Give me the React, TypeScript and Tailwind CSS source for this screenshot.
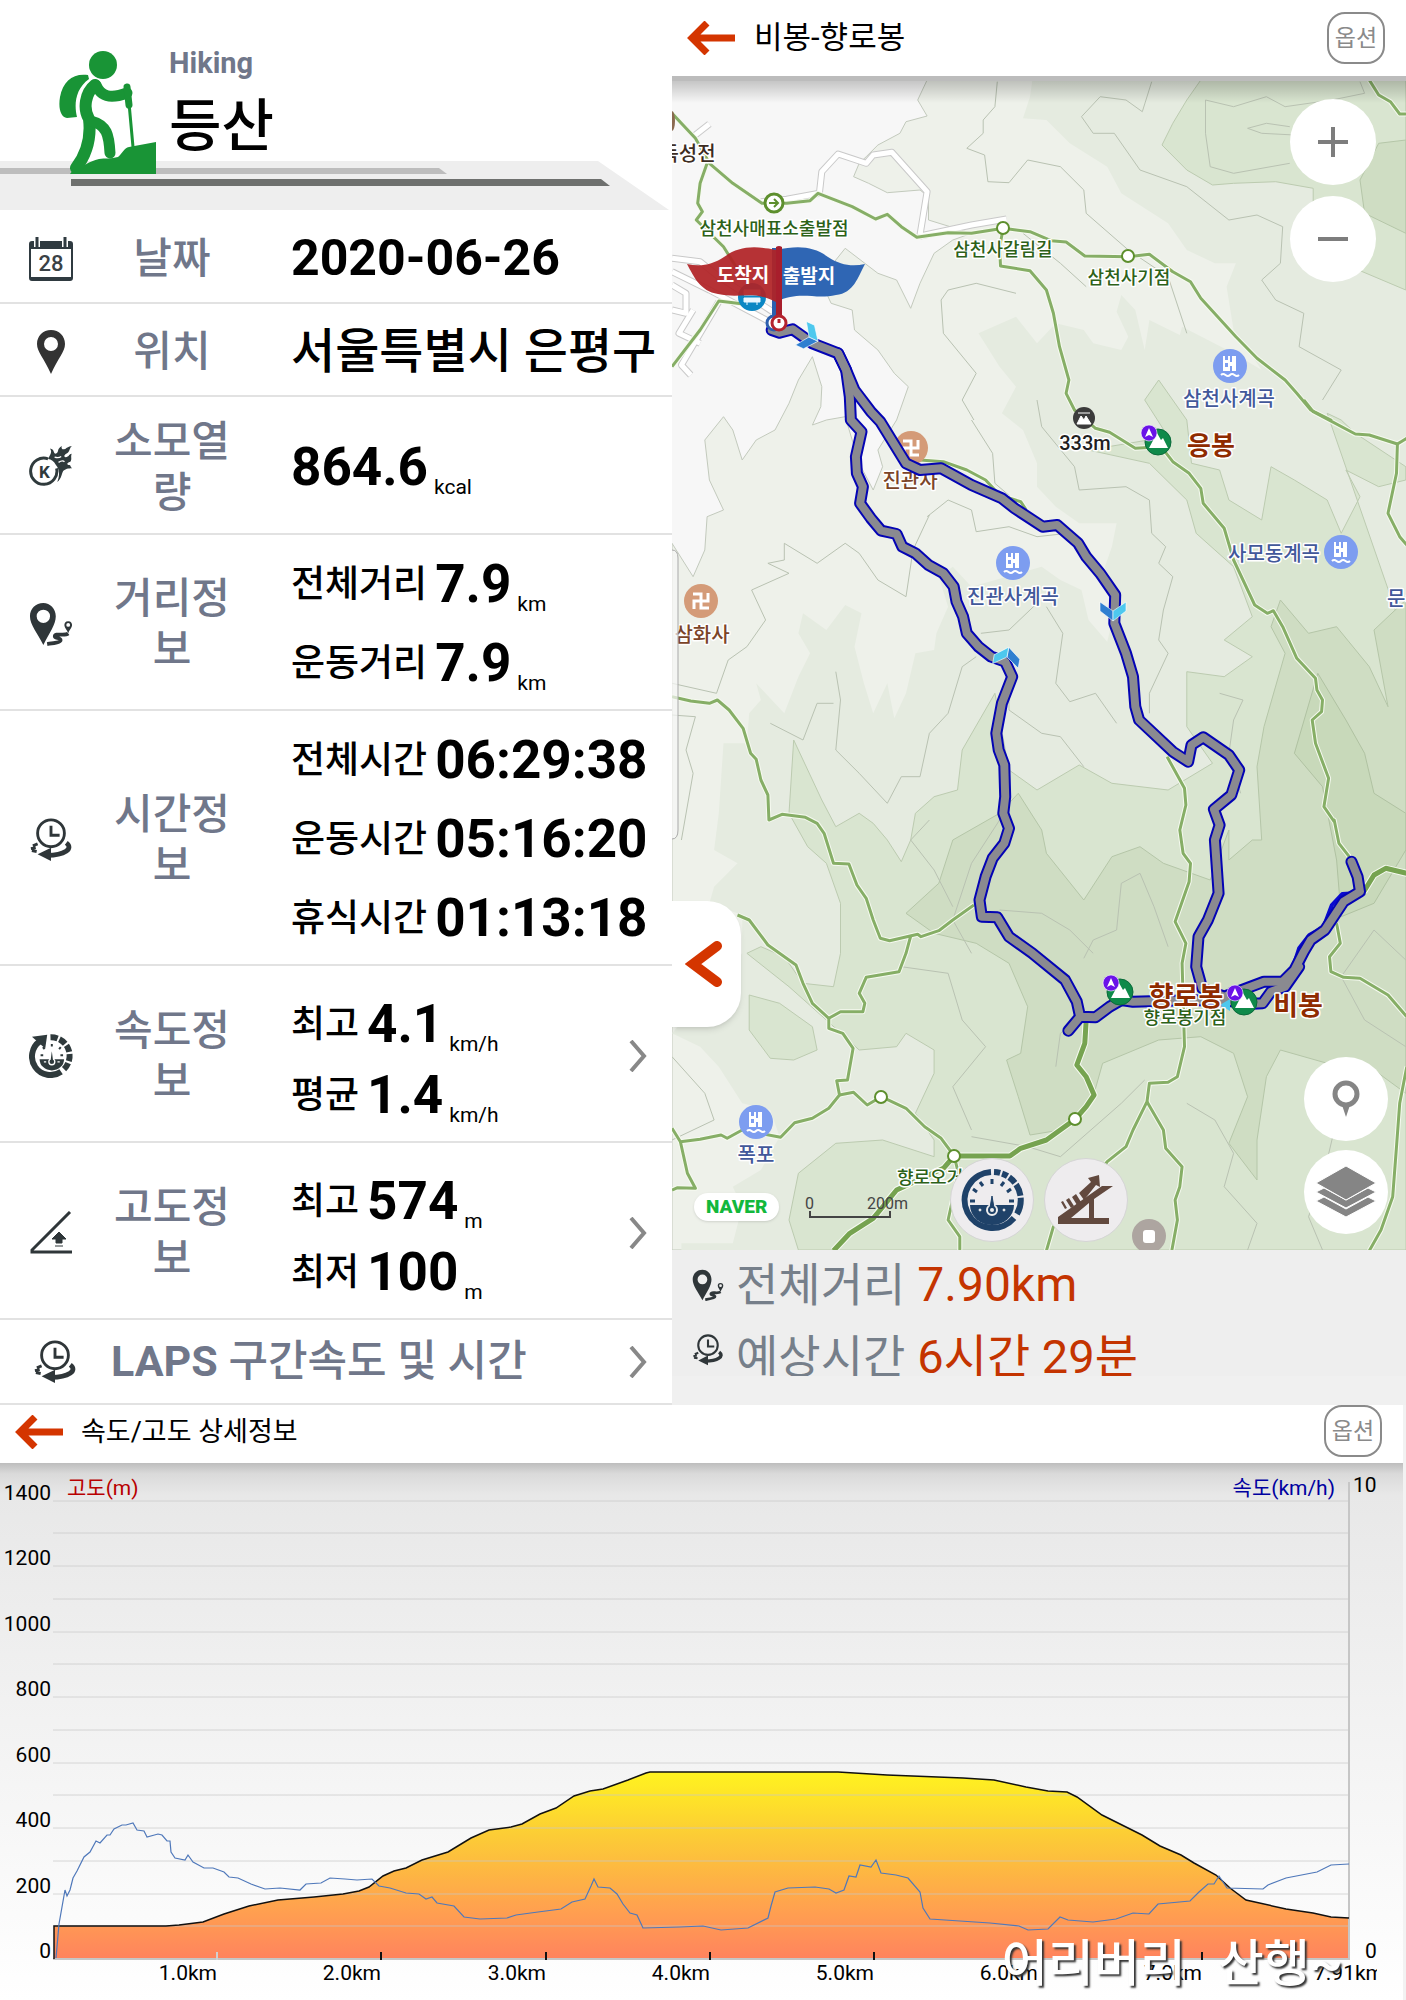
import React from 'react';

type Pt = [number, number];

const sheet = (top: number, pts: Pt[]): Pt[] => pts.map(([x, y]) => [x * 0.468, y / 3 + top]);
const north = (pts: Pt[]) => sheet(-81, pts);
const middle = (pts: Pt[]) => sheet(319, pts);
const south = (pts: Pt[]) => sheet(739, pts);
const toPoints = (pts: Pt[]) => pts.map(([x, y]) => `${x.toFixed(1)},${y.toFixed(1)}`).join(' ');

const TERRAIN_LOW = toPoints([
  ...north([[545, 240], [525, 300], [545, 348], [500, 365], [487, 400], [440, 435], [415, 470], [400, 490], [388, 530], [420, 550], [460, 578], [530, 570], [548, 590], [548, 660], [640, 700], [600, 720], [560, 760], [530, 850], [510, 925], [480, 840], [440, 820], [370, 745], [350, 780], [320, 850], [340, 910], [385, 930], [390, 990], [440, 1050], [475, 1120], [505, 1160], [480, 1260]]),
  ...middle([[480, 60], [440, 150], [450, 200], [430, 270], [400, 190], [370, 50], [330, 60], [300, 75], [318, 20], [320, -40], [300, -130], [270, -60], [250, 10], [220, 90], [180, 120], [150, 180], [130, 90], [110, 50], [70, 120], [80, 240], [110, 330], [75, 350], [70, 450], [45, 530], [0, 430]]),
  [0, 1169], [734, 1169], [734, -1],
]);

const TERRAIN_MID = toPoints([
  ...north([[770, 240], [765, 290], [750, 355], [800, 360], [850, 430], [930, 500], [960, 580], [1060, 670], [1100, 750], [1160, 790], [1205, 790], [1185, 860], [1200, 990], [1260, 1110], [1200, 1060], [1090, 980], [1085, 1005], [1020, 960], [1010, 1050], [990, 930], [960, 885], [950, 935], [975, 1010], [960, 1050], [900, 1030], [880, 990], [820, 970], [780, 1030], [735, 950], [655, 1000], [700, 1100], [735, 1160], [705, 1240]]),
  ...middle([[750, 90], [780, 190], [780, 260], [820, 320], [870, 370], [950, 370], [940, 440], [925, 500], [945, 640], [930, 725], [890, 660], [875, 570], [830, 540], [790, 500], [640, 560], [600, 500], [570, 530], [590, 620], [565, 700], [560, 750], [520, 760], [500, 880], [475, 955], [460, 850], [430, 940], [410, 850], [390, 740], [405, 640], [370, 615], [330, 690], [280, 640], [270, 700], [295, 760], [270, 830], [240, 940], [180, 850], [190, 900], [165, 940], [160, 1030], [110, 1030], [100, 1240]]),
  ...south([[90, 90], [140, 130], [90, 200], [80, 250], [150, 285], [150, 400], [0, 640], [60, 680], [100, 740], [150, 850], [210, 870], [230, 950], [190, 1050], [130, 1100], [150, 1160], [130, 1270], [20, 1270], [20, 1290]]),
  [734, 1169], [734, -1],
]);

const TERRAIN_HIGH = [
  toPoints([...north([[1130, 240], [1100, 300], [1070, 370], [1047, 435], [1100, 510], [1155, 555], [1200, 550], [1290, 545], [1370, 565], [1370, 620], [1450, 640], [1450, 800], [1568, 870], [1568, 240]])]),
  toPoints([
    ...north([[1400, 1240], [1430, 1260]]),
    ...middle([[1460, 100], [1568, 200], [1568, 240], [1510, 260], [1440, 210], [1470, 290], [1430, 400], [1400, 300], [1330, 240], [1280, 200], [1260, 360], [1190, 300], [1170, 210], [1110, 190], [1100, 60], [1040, -60], [1010, 0], [1060, 110], [890, 150], [1020, 190], [1100, 300], [1120, 400], [1200, 500], [1240, 650], [1180, 720], [1240, 770], [1180, 830], [1100, 815], [1100, 980], [1155, 1090], [1060, 1170], [940, 1150], [870, 1095], [780, 1170], [720, 1110], [690, 880], [620, 1050], [610, 1170], [560, 1190], [520, 1240]]),
    ...south([[510, 60], [490, 125], [460, 60], [430, 10], [400, -20], [350, 20], [320, -60], [260, -240], [250, -20], [290, 80], [330, 130], [360, 250], [360, 400], [345, 500], [280, 490], [240, 410], [190, 380], [160, 400], [250, 500], [330, 600], [400, 690], [480, 680], [500, 640], [560, 690], [560, 760], [520, 880], [560, 960], [560, 1010], [450, 960], [350, 970], [270, 1060], [250, 1200], [270, 1290]]),
    [734, 1169], [734, 560],
  ]),
  toPoints(south([[165, 525], [230, 550], [300, 620], [310, 690], [260, 720], [210, 715], [165, 630]])),
];

const TERRAIN_PEAK = [
  toPoints([
    ...middle([[1300, 600], [1280, 680], [1310, 760], [1265, 980], [1250, 1100], [1260, 1320]]),
    ...south([[1240, 60], [1190, 120], [1190, 30], [1150, 180], [1050, 130], [1000, 80], [940, 110], [880, 240], [800, 100], [790, 30], [740, -80], [700, -20], [600, 60], [570, 190], [500, 280], [560, 340], [650, 370], [720, 430], [760, 560], [745, 700], [715, 720], [740, 830], [765, 945], [830, 930], [900, 830], [920, 730], [1040, 660], [1130, 650], [1200, 700], [1230, 830], [1190, 970], [1250, 1080], [1250, 960], [1270, 770], [1300, 690], [1400, 730], [1500, 750], [1568, 820]]),
    [734, 520],
    ...middle([[1568, 600], [1500, 690], [1530, 920], [1490, 800], [1420, 680], [1360, 700]]),
  ]),
  toPoints(north([[1470, 540], [1510, 430], [1568, 420], [1568, 700], [1480, 640]])),
];

const TERRAIN_CORE = toPoints([
  ...middle([[1380, 820], [1440, 960], [1480, 1060], [1500, 1180], [1568, 1240]]),
  ...south([[1568, 90], [1500, 250], [1430, 290], [1420, 120], [1390, -100], [1330, -200]]),
]);

const CONTOURS = [
  north([[695, 245], [690, 320], [665, 360], [665, 400], [630, 445], [668, 465], [675, 545], [720, 548], [760, 480], [830, 500], [880, 570], [885, 640], [975, 750], [1060, 830], [1100, 1000]]),
  north([[1025, 245], [1005, 335], [970, 300], [915, 290], [875, 350], [900, 400], [945, 400], [1000, 510], [1100, 560], [1190, 660], [1250, 645], [1305, 680], [1300, 790], [1260, 840], [1290, 900], [1350, 940], [1340, 1040], [1430, 1110], [1390, 1200]]),
  north([[1140, 300], [1200, 320], [1270, 290], [1310, 320], [1410, 300], [1480, 280], [1470, 245]]),
  north([[1140, 300], [1140, 400], [1150, 500], [1200, 520], [1320, 490]]),
  north([[1320, 380], [1270, 370], [1230, 385], [1260, 400], [1330, 405]]),
  north([[735, 880], [650, 850], [590, 870], [575, 900], [580, 1000], [650, 1120], [620, 1200], [645, 1260]]),
  north([[750, 700], [830, 790], [885, 860]]),
  middle([[640, 60], [685, 160], [690, 250], [740, 310]]),
  middle([[545, 350], [590, 300], [640, 330], [650, 395], [720, 380], [780, 410], [845, 400]]),
  middle([[500, 590], [515, 450], [550, 345]]),
  middle([[500, 590], [440, 540], [400, 460], [370, 430], [310, 490], [240, 430], [240, 480], [205, 490], [250, 520], [170, 570], [200, 660], [160, 740], [120, 780], [95, 880], [0, 850]]),
  middle([[780, 0], [790, 80], [860, 200], [870, 270], [970, 260], [1020, 300], [1025, 400], [1055, 440], [1040, 490], [1070, 530], [1050, 630], [1040, 720], [1060, 760], [1020, 880], [1020, 940]]),
  middle([[800, 620], [835, 700], [820, 850], [850, 905], [905, 880], [950, 970]]),
  middle([[660, 700], [720, 690], [780, 610]]),
  middle([[720, 800], [720, 930], [790, 1000], [830, 1010], [880, 1100]]),
  middle([[350, 815], [360, 900], [350, 1050], [400, 1120], [460, 1210], [490, 1130], [530, 1130], [550, 1000], [590, 940], [620, 800], [650, 770]]),
  middle([[0, 945], [50, 950], [30, 1050], [45, 1120], [20, 1320]]),
  middle([[210, 970], [280, 1020], [310, 910], [345, 910]]),
  middle([[1170, 880], [1220, 900], [1200, 960], [1190, 1060], [1215, 1180]]),
  south([[550, 0], [510, 60], [560, 150], [600, 260]]),
  south([[700, 0], [640, 130], [600, 300], [640, 400]]),
  south([[900, 400], [850, 330], [790, 280], [700, 270]]),
  south([[880, 415], [900, 360], [950, 330], [960, 190], [1000, 160], [1030, 260], [1060, 380]]),
  south([[490, 440], [590, 460], [620, 600], [670, 680], [600, 800], [640, 930]]),
  south([[0, 710], [70, 820], [90, 900], [0, 960]]),
  south([[820, 740], [830, 640], [870, 600]]),
  south([[1100, 850], [1160, 900], [1200, 1000], [1180, 1100], [1250, 1210], [1230, 1290]]),
  south([[1390, 1290], [1360, 1190], [1390, 1080], [1420, 900], [1400, 800]]),
  south([[1568, 420], [1500, 330], [1430, 470], [1480, 600], [1568, 680]]),
  south([[640, 950], [760, 980], [830, 1010], [960, 850], [1010, 780]]),
];

const TRAILS = [
  north([[0, 340], [50, 415], [80, 490], [130, 550], [192, 610], [245, 610], [295, 602], [312, 580], [385, 620], [435, 657], [460, 643], [490, 680], [523, 712], [590, 698], [640, 700], [708, 685], [765, 695], [810, 722], [842, 726], [882, 768], [975, 770], [1020, 763], [1070, 815], [1108, 845], [1130, 895], [1205, 1010], [1250, 1075], [1310, 1140], [1335, 1180], [1365, 1230], [1410, 1262]]),
  middle([[1350, 0], [1370, 35], [1460, 102], [1490, 105], [1550, 132], [1548, 220], [1530, 340], [1555, 410], [1570, 435]]),
  middle([[1550, 132], [1570, 115]]),
  [
    ...north([[708, 685], [700, 740], [702, 798], [765, 812], [800, 870], [815, 940], [828, 1040], [848, 1140], [842, 1180], [860, 1230]]),
    ...middle([[905, 85], [935, 97], [990, 145], [1045, 140], [1070, 185], [1105, 220], [1130, 265], [1135, 310], [1180, 385], [1200, 480], [1245, 615], [1272, 640], [1285, 632], [1305, 680], [1335, 775], [1375, 835], [1378, 870], [1390, 900], [1388, 935], [1368, 960], [1375, 1030], [1403, 1135], [1393, 1220], [1415, 1265]]),
    ...south([[1415, 0], [1425, 70], [1450, 115]]),
  ],
  north([[75, 490], [60, 550], [55, 610], [65, 635], [52, 660], [110, 740], [150, 830]]),
  north([[170, 915], [100, 903], [60, 990], [0, 1100]]),
  north([[1490, 240], [1510, 285], [1535, 305], [1555, 342], [1570, 342]]),
  [
    ...middle([[0, 890], [40, 903], [80, 910], [97, 900], [122, 930], [152, 985], [168, 1060], [180, 1078], [190, 1140], [205, 1185], [207, 1260], [235, 1243], [285, 1252], [310, 1270]]),
    ...south([[325, 40], [345, 130], [378, 132], [395, 195], [415, 235], [430, 300], [445, 355], [465, 362], [525, 343], [532, 350], [570, 332], [600, 300], [645, 255]]),
  ],
  south([[510, 348], [500, 400], [485, 455], [415, 472], [400, 520], [412, 550], [408, 575], [360, 575], [335, 595]]),
  south([[140, 285], [165, 300], [205, 375], [265, 435], [280, 490], [300, 550], [335, 595], [335, 625], [365, 640], [387, 685], [375, 780], [352, 782], [358, 825], [335, 865], [300, 895], [262, 908], [232, 952], [150, 930], [118, 955], [105, 945], [60, 958], [18, 965], [0, 925]]),
  south([[18, 965], [33, 1060], [50, 1105], [12, 1103], [0, 1110]]),
  south([[358, 825], [388, 817], [417, 855], [447, 830], [500, 865], [540, 920], [575, 955], [603, 1008]]),
  [
    ...middle([[1058, 1070], [1095, 1165], [1098, 1215], [1085, 1290]]),
    ...south([[1092, 100], [1108, 130], [1105, 185], [1075, 305], [1098, 370], [1090, 430], [1095, 680], [1080, 770], [1060, 787], [1020, 790], [1015, 845], [985, 930], [970, 980], [930, 1025], [860, 1150], [815, 1220], [800, 1292]]),
  ],
  south([[1015, 845], [1050, 930], [1055, 985], [1090, 1040], [1085, 1100], [1075, 1140], [1080, 1200], [1068, 1292]]),
  south([[1420, 310], [1428, 370], [1405, 410], [1408, 455], [1435, 472], [1470, 475], [1530, 525], [1570, 590]]),
  south([[1570, 740], [1555, 850], [1548, 980], [1540, 1130], [1515, 1230], [1490, 1292]]),
  south([[603, 1008], [612, 1060], [590, 1200], [615, 1250], [615, 1292]]),
  middle([[530, 180], [580, 185], [630, 210], [670, 240], [700, 285], [745, 305], [757, 330]]),
].map(toPoints);

const MAIN_TRAILS = [
  south([[885, 600], [882, 670], [865, 735], [885, 770], [902, 825], [885, 860], [862, 897], [800, 960], [745, 985], [722, 1008], [660, 1008], [603, 1008], [580, 1045], [480, 1110], [430, 1195], [380, 1240], [345, 1292]]),
  south([[1478, 215], [1500, 165], [1525, 145], [1570, 160]]),
].map(toPoints);

const ROADS = [
  north([[190, 605], [245, 598], [315, 580], [320, 515], [355, 462], [415, 490], [430, 465], [470, 457], [545, 575], [530, 705]]),
  north([[530, 708], [640, 675], [715, 657]]),
  north([[0, 775], [60, 785], [100, 830], [215, 935]]),
  north([[0, 815], [80, 870], [215, 970], [260, 1000]]),
  north([[100, 905], [20, 1095], [40, 1125]]),
  north([[80, 372], [45, 410]]),
  north([[0, 855], [30, 880], [30, 940], [0, 930]]),
  north([[45, 930], [15, 1000], [60, 1030]]),
].map(toPoints);

const ROUTES = [
  [
    ...north([[213, 990], [230, 998], [258, 988], [300, 1030], [355, 1060], [372, 1110], [380, 1190], [382, 1255]]),
    ...middle([[382, 60], [405, 95], [393, 170], [395, 220], [408, 260], [402, 310], [425, 355], [447, 392], [480, 402], [492, 440], [520, 460], [548, 495], [580, 520], [602, 560], [608, 605], [622, 650], [630, 700], [655, 740], [682, 770], [712, 785], [727, 830], [705, 910], [693, 1000], [698, 1050], [710, 1095], [712, 1190], [708, 1240]]),
    ...south([[720, 25], [710, 70], [685, 115], [670, 170], [657, 240], [662, 290], [695, 292], [720, 350], [770, 400], [840, 480], [865, 545], [872, 590], [847, 632], [872, 590], [905, 592], [935, 560], [960, 540], [985, 545], [1060, 542], [1180, 540], [1230, 552], [1262, 550], [1280, 515], [1310, 500], [1340, 440]]),
  ],
  [
    ...north([[355, 1060], [372, 1110], [390, 1170], [425, 1235]]),
    ...middle([[445, 65], [500, 190], [530, 210], [575, 205], [640, 255], [705, 295], [732, 325], [792, 380], [823, 375], [868, 430], [885, 470], [915, 520], [947, 585], [945, 670], [970, 760], [985, 830], [990, 920], [998, 960], [1070, 1055], [1103, 1085], [1110, 1035], [1135, 1012], [1190, 1065], [1212, 1110], [1195, 1185], [1158, 1228], [1170, 1275]]),
    ...south([[1160, 60], [1168, 220], [1145, 300], [1125, 350], [1120, 440], [1133, 505], [1180, 530], [1265, 485], [1305, 485], [1330, 450], [1350, 395], [1365, 360], [1395, 330], [1435, 245], [1470, 215], [1465, 170], [1452, 125]]),
  ],
].map(toPoints);

interface MapLabel {
  text: string;
  x: number;
  y: number;
  size: number;
  fill: string;
  anchor?: 'start' | 'middle';
  bold?: boolean;
}

const GREEN = '#2c6118';
const BLUE = '#42589a';
const BROWN = '#7b4428';
const PEAK_BROWN = '#8f2b00';

// Drawn below the recorded route
const LABELS: MapLabel[] = [
  { text: '독성전', x: 16, y: 80, size: 20, fill: '#3c2c22' },
  { text: '삼천사매표소출발점', x: 102, y: 154, size: 18, fill: GREEN },
  { text: '삼천사갈림길', x: 331, y: 175, size: 18, fill: GREEN },
  { text: '삼천사기점', x: 457, y: 203, size: 18, fill: GREEN },
  { text: '삼천사계곡', x: 557, y: 325, size: 20, fill: BLUE },
  { text: '333m', x: 413, y: 369, size: 20, fill: '#1f1f1f' },
  { text: '응봉', x: 539, y: 374, size: 26, fill: PEAK_BROWN, bold: true },
  { text: '진관사', x: 238, y: 407, size: 20, fill: BROWN },
  { text: '진관사계곡', x: 341, y: 523, size: 20, fill: BLUE },
  { text: '사모동계곡', x: 602, y: 480, size: 20, fill: BLUE },
  { text: '문수사', x: 715, y: 525, size: 20, fill: BLUE, anchor: 'start' },
  { text: '삼화사', x: 30, y: 561, size: 20, fill: BROWN },
  { text: '폭포', x: 84, y: 1081, size: 20, fill: BLUE },
  { text: '향로오거리', x: 225, y: 1103, size: 18, fill: GREEN, anchor: 'start' },
];

const TOP_LABELS: MapLabel[] = [
  { text: '향로봉기점', x: 513, y: 943, size: 18, fill: GREEN },
  { text: '향로봉', x: 514, y: 925, size: 27, fill: PEAK_BROWN, bold: true },
  { text: '비봉', x: 626, y: 934, size: 27, fill: PEAK_BROWN, bold: true },
];

const MapLabels = ({ labels }: { labels: MapLabel[] }) => (
  <g fontFamily="Roboto, 'Noto Sans CJK KR', sans-serif" stroke="#fff" strokeWidth="3" strokeLinejoin="round" paintOrder="stroke">
    {labels.map((l) => (
      <text key={l.text} x={l.x} y={l.y} fontSize={l.size} fill={l.fill} fontWeight={l.bold ? 700 : 500} textAnchor={l.anchor ?? 'middle'}>{l.text}</text>
    ))}
  </g>
);

const Waterfall = ({ x, y }: { x: number; y: number }) => (
  <g transform={`translate(${x} ${y})`}>
    <circle r="17" fill="#7d9df0" />
    <path d="M-7-10h2v4h3v-4h2v6h2v-6h4v15h-4v-5h-2v5h-7z" fill="#fff" />
    <path d="M-5-3h3v4h-3z" fill="#7d9df0" />
    <path d="M-9 9q2-2 4.500 0t4.500 0t4.500 0t4.500 0" fill="none" stroke="#fff" strokeWidth="2" />
  </g>
);

const Temple = ({ x, y }: { x: number; y: number }) => (
  <g transform={`translate(${x} ${y})`}>
    <circle r="17" fill="#d49b78" />
    <path d="M-8-7H0V7H8M-7 8V0H7V-8" fill="none" stroke="#fff" strokeWidth="3" />
  </g>
);

const Peak = ({ x, y }: { x: number; y: number }) => (
  <g transform={`translate(${x} ${y})`}>
    <circle r="13" fill="#0f8a4a" stroke="#0a6a3a" strokeWidth="1" />
    <path d="M-9 6L-1-9L3-2L5-4L10 6z" fill="#fff" />
    <circle cx="-9" cy="-9" r="8" fill="#6a12e8" stroke="#fff" strokeOpacity=".6" />
    <path d="M-13-5L-9-14L-5-5L-9-7z" fill="#fff" />
  </g>
);

const Chevron = ({ x, y, turn }: { x: number; y: number; turn: number }) => (
  <g transform={`translate(${x} ${y}) rotate(${turn})`} stroke="#fff" strokeWidth=".6">
    <path d="M-13-9L0 0V10L-13 0z" fill="#2f7fd0" />
    <path d="M13-9L0 0V10L13 0z" fill="#4ec8ee" />
  </g>
);

function TrailMap() {
  return (
    <svg viewBox="0 0 734 1169" className="block h-auto w-full" role="img" aria-label="비봉-향로봉 지도">
      <defs>
        <linearGradient id="mapShade" x1="0" y1="0" x2="0" y2="1">
          <stop offset="0" stopColor="#000" stopOpacity=".2" />
          <stop offset="1" stopColor="#000" stopOpacity="0" />
        </linearGradient>
      </defs>
      <rect width="734" height="1169" fill="#f7f7f7" />
      <g stroke="#c3cabd" strokeWidth="1">
        <polygon points={TERRAIN_LOW} fill="#eef1ea" />
        <polygon points={TERRAIN_MID} fill="#e5ebe0" stroke="none" />
        {TERRAIN_HIGH.map((p) => <polygon key={p} points={p} fill="#d9e5d0" stroke="#bccbb0" />)}
        {TERRAIN_PEAK.map((p) => <polygon key={p} points={p} fill="#cfddc3" stroke="#b5c6a8" />)}
        <polygon points={TERRAIN_CORE} fill="#c8d9ba" stroke="#b0c2a2" />
      </g>
      <g fill="none" stroke="#b9c2b2" strokeWidth="1" strokeLinejoin="round">
        {CONTOURS.map((c, i) => <polyline key={i} points={toPoints(c)} />)}
      </g>
      <g fill="none" strokeLinejoin="round">
        {ROADS.map((p) => <polyline key={p} points={p} stroke="#c9c9c9" strokeWidth="7" />)}
        {ROADS.map((p) => <polyline key={p} points={p} stroke="#fff" strokeWidth="5" />)}
        {TRAILS.map((p) => <polyline key={p} points={p} stroke="#f6faf0" strokeWidth="5" />)}
        {TRAILS.map((p) => <polyline key={p} points={p} stroke="#86ae66" strokeWidth="3" />)}
        {MAIN_TRAILS.map((p) => <polyline key={p} points={p} stroke="#f6faf0" strokeWidth="7" />)}
        {MAIN_TRAILS.map((p) => <polyline key={p} points={p} stroke="#76a350" strokeWidth="5" />)}
      </g>

      {/* Trail junctions */}
      <g fill="#fff" stroke="#5d8f2d">
        <circle cx="102" cy="122" r="9" strokeWidth="3" />
        <path d="M97 122h9m-4-4l4 4l-4 4" fill="none" strokeWidth="2" />
        {[[331, 147], [456, 175], [209, 1016], [282, 1075], [403, 1038]].map(([x, y]) => (
          <circle key={x} cx={x} cy={y} r="6" strokeWidth="2" />
        ))}
      </g>

      <Waterfall x={558} y={285} />
      <Waterfall x={341} y={482} />
      <Waterfall x={669} y={471} />
      <Waterfall x={84} y={1041} />
      <Temple x={239} y={367} />
      <Temple x={29} y={520} />
      <circle cx="412" cy="337" r="11" fill="#3b3b3b" />
      <path d="M405 343l4-8l3 4l2-4l5 8zM406 332h12" fill="#fff" stroke="#fff" strokeWidth="1" />
      <ellipse cx="0" cy="40" rx="3" ry="10" fill="#8a6a50" />
      <circle cx="477" cy="1155" r="17" fill="#ada5a0" />
      <rect x="471" y="1149" width="12" height="13" rx="3" fill="#fff" />

      <MapLabels labels={LABELS} />

      {/* Recorded route */}
      <g fill="none" strokeLinejoin="round" strokeLinecap="round">
        <polyline points={toPoints(south([[1300, 500], [1318, 480], [1340, 385], [1362, 345], [1392, 322], [1410, 255], [1432, 222], [1476, 218]]))} stroke="#0a0ad0" strokeWidth="4" />
        {ROUTES.map((p) => <polyline key={p} points={p} stroke="#0404b4" strokeWidth="12" />)}
        {ROUTES.map((p) => <polyline key={p} points={p} stroke="#8a8a90" strokeWidth="8" />)}
      </g>
      <Chevron x={137} y={256} turn={-65} />
      <Chevron x={441} y={530} turn={0} />
      <Chevron x={335} y={576} turn={190} />
      <path d="M548 924l10-6v12z" fill="#4ec8ee" />
      <Peak x={486} y={361} />
      <Peak x={448} y={911} />
      <Peak x={572} y={921} />
      <MapLabels labels={TOP_LABELS} />

      {/* Start and finish flags */}
      <circle cx="80" cy="216" r="14" fill="#0b87c4" />
      <path d="M72 214h16v-5H72zM72 217h16v4H72zM75 221v3M85 221v3" fill="#e8f6ff" stroke="#e8f6ff" />
      <circle cx="102" cy="242" r="7" fill="#fff" stroke="#2c5fae" strokeWidth="3" />
      <path d="M100 167h4v68h-4z" fill="#2c5fae" />
      <path d="M104 169C128 164 142 166 156 176C168 184 180 186 193 183C186 196 182 212 164 214C142 219 128 209 104 221z" fill="#2f66b4" />
      <path d="M104 169C80 164 66 166 52 176C40 184 28 186 15 183C22 196 28 210 46 213C68 218 82 209 104 221z" fill="#b02226" fillOpacity=".93" />
      <path d="M104 166q3-2 6 0v72h-6z" fill="#a81e2c" />
      <circle cx="107" cy="242" r="7" fill="#fff" stroke="#b4232e" strokeWidth="3" />
      <path d="M107 238v4" stroke="#b4232e" strokeWidth="3" />
      <g fill="#fff" fontSize="19" fontWeight="700" textAnchor="middle" fontFamily="'Noto Sans CJK KR', sans-serif">
        <text x="71" y="201">도착지</text>
        <text x="137" y="202">출발지</text>
      </g>

      {/* Scale */}
      <path d="M138 1130v6h80v-6" fill="none" stroke="#444" strokeWidth="2" />
      <g fontFamily="Roboto, sans-serif" fontSize="16" fill="#444">
        <text x="133" y="1128">0</text>
        <text x="195" y="1128">200m</text>
      </g>

      <path d="M-2 469h2q6 0 6 8v272q0 9-6 9h-2z" fill="#f7f7f7" fillOpacity=".7" stroke="#a9a9a9" />
      <rect width="734" height="22" fill="url(#mapShade)" />
    </svg>
  );
}

const BackArrow = () => (
  <svg viewBox="0 0 49 34" className="h-[34px] w-[49px] shrink-0" fill="none" stroke="#d43500" strokeWidth="7" aria-hidden="true">
    <path d="M20 2L5 17L20 32M5 17H48" />
  </svg>
);

const RouteIcon = () => (
  <svg viewBox="0 0 44 46" className="h-full w-full" aria-hidden="true">
    <path d="M14 1C6 1 0 7 0 15C0 24 8 33 14 45C20 33 27 24 27 15C27 7 21 1 14 1zM14 8a7 7 0 1 1 0 14a7 7 0 0 1 0-14z" fill="#2f3639" fillRule="evenodd" />
    <path d="M40 20c-3 0-4 2-4 4c0 3 3 5 4 9c1-4 4-6 4-9c0-2-1-4-4-4zM40 22a2 2 0 1 1 0 4a2 2 0 0 1 0-4z" fill="#2f3639" fillRule="evenodd" />
    <path d="M40 33c-4 3-14-1-14 3c0 2 6 1 6 4c0 2-8 3-14 4" fill="none" stroke="#2f3639" strokeWidth="4" />
  </svg>
);

const TimeIcon = () => (
  <svg viewBox="0 0 44 46" className="h-full w-full" fill="none" stroke="#2f3639" aria-hidden="true">
    <circle cx="22" cy="16" r="14" strokeWidth="3" />
    <path d="M22 8v10h9" strokeWidth="3" />
    <path d="M38 26c8 6-2 13-20 13" strokeWidth="5" />
    <path d="M22 31v14L8 38z" fill="#2f3639" stroke="none" />
    <path d="M8 27l-5 2M6 31l-5 1M7 35l-5-1" strokeWidth="3" />
  </svg>
);

const CalendarIcon = () => (
  <svg viewBox="0 0 44 44" className="h-full w-full" aria-hidden="true">
    <rect x="1" y="5" width="42" height="38" rx="2" fill="#fff" stroke="#2f3a40" strokeWidth="2" />
    <path d="M1 5h42v7H1zM1 40h42v3H1z" fill="#2f3a40" />
    <path d="M8 1v9M36 1v9" stroke="#fff" strokeWidth="6" />
    <path d="M8 0v10M36 0v10" stroke="#2f3a40" strokeWidth="3" />
    <text x="22" y="34" fontSize="22" fontWeight="500" textAnchor="middle" fontFamily="Roboto, sans-serif" fill="#3a4246">28</text>
  </svg>
);

const PinIcon = () => (
  <svg viewBox="0 0 44 44" className="h-full w-full" aria-hidden="true">
    <path d="M22 0C14 0 8 6 8 14C8 22 15 28 22 44C29 28 36 22 36 14C36 6 30 0 22 0zM22 7a7 7 0 1 1 0 14a7 7 0 0 1 0-14z" fill="#333" fillRule="evenodd" />
  </svg>
);

const CalorieIcon = () => (
  <svg viewBox="26 38 134 132" className="h-full w-full" aria-hidden="true">
    <path d="M84 79A40 40 0 1 0 110 108" fill="none" stroke="#2f3a3c" strokeWidth="9" />
    <path d="M84 80C90 66 98 60 90 48C104 50 100 62 106 64C120 60 108 50 126 40C122 50 132 54 140 46Q150 40 157 40C148 46 152 56 142 62C134 66 130 72 138 74C148 74 146 66 156 64C152 74 158 80 152 88C146 90 138 94 146 98C156 98 150 104 158 108C144 108 138 110 130 116C126 122 126 138 112 150C120 130 120 112 108 98C102 88 94 80 84 80z" fill="#2f3a3c" />
    <path d="M104 74q12 4 20-2M116 90q12-8 18-2" fill="none" stroke="#fff" strokeWidth="4" />
    <text x="73" y="137" fontSize="52" fontWeight="700" textAnchor="middle" fontFamily="Roboto, sans-serif" fill="#2f3a3c">K</text>
  </svg>
);

const SpeedIcon = () => (
  <svg viewBox="27 22 133 133" className="h-full w-full" aria-hidden="true">
    <path d="M60 44A56 56 0 0 0 124 136" fill="none" stroke="#2f3a3c" strokeWidth="18" />
    <path d="M36 30L82 24L76 66z" fill="#2f3a3c" />
    <path d="M133 128A56 56 0 0 0 92 32" fill="none" stroke="#2f3a3c" strokeWidth="18" strokeDasharray="22 6" />
    <path d="M59 98H133A37 34 0 0 1 59 98z" fill="#2f3a3c" />
    <path d="M96 60v-8M74 68l-5-6M118 68l5-6M62 86h8M122 86h8" stroke="#2f3a3c" strokeWidth="6" />
    <circle cx="96" cy="106" r="9" fill="none" stroke="#fff" strokeWidth="4" />
    <path d="M92 104L96 74L100 104z" fill="#2f3a3c" />
    <path d="M72 106h7M113 106h7" stroke="#fff" strokeWidth="4" />
  </svg>
);

const SlopeIcon = () => (
  <svg viewBox="0 0 44 44" className="h-full w-full" aria-hidden="true">
    <path d="M41 1L3 39V41H43" fill="none" stroke="#2f3639" strokeWidth="3" />
    <path d="M30 21L37 28H33V32H27V28H23zM26 35h8" fill="#2f3639" stroke="#2f3639" />
  </svg>
);

const HikerIcon = () => (
  <svg viewBox="0 0 98 124" className="h-[124px] w-[98px] shrink-0" aria-hidden="true">
    <g fill="#199436">
      <circle cx="44" cy="14" r="14" />
      <path d="M29 24C14 22 4 30 1 46C-1 58 2 66 8 67L18 66C15 54 16 38 30 28z" />
      <path d="M11 123L14 119C24 116 30 110 40 108C46 107 52 108 59 106C63 103 65 97 70 96L97 91V123z" />
    </g>
    <g fill="none" stroke="#199436" strokeLinecap="round" strokeLinejoin="round">
      <path d="M36 34C26 42 24 58 30 68C32 84 30 100 17 117" strokeWidth="12" />
      <path d="M37 34C42 46 52 48 68 42" strokeWidth="11" />
      <path d="M32 70C48 74 50 84 51 102" strokeWidth="11" />
      <path d="M68 36L70 54" strokeWidth="7" />
      <path d="M70 52L74 96" strokeWidth="3" />
    </g>
  </svg>
);

const ChevronRight = () => (
  <svg viewBox="0 0 18 32" className="h-8 w-[18px]" fill="none" stroke="#888" strokeWidth="4" aria-hidden="true">
    <path d="M2 1L15 16L2 31" />
  </svg>
);

interface Metric {
  name?: string;
  value: string;
  unit?: string;
}

interface InfoRowProps {
  icon: React.ReactNode;
  label: React.ReactNode;
  metrics: Metric[];
  valueClass?: string;
  padding: string;
  more?: boolean;
}

function InfoRow({ icon, label, metrics, valueClass = 'text-[53px] leading-[79px] font-bold', padding, more }: InfoRowProps) {
  return (
    <div className={`flex items-center border-b-2 border-[#e2e2e2] ${padding}`}>
      <div className="ml-[29px] h-11 w-11 shrink-0">{icon}</div>
      <dt className="ml-[29px] w-[140px] shrink-0 text-center text-[42px] font-medium leading-[51px] text-[#70778a]">{label}</dt>
      <dd className={`ml-[49px] min-w-0 flex-1 whitespace-nowrap text-black ${more ? 'pt-[9px]' : ''}`}>
        {metrics.map((m) => (
          <div key={m.value + (m.name ?? '')} className={`flex items-center ${valueClass}`}>
            {m.name && <span className="mr-2 text-[37px] font-medium leading-none">{m.name}</span>}
            <span>{m.value}</span>
            {m.unit && <span className="ml-[6px] pt-10 text-[21px] font-normal leading-none">{m.unit}</span>}
          </div>
        ))}
      </dd>
      {more && (
        <button type="button" aria-label="상세보기" className="mr-[25px] shrink-0">
          <ChevronRight />
        </button>
      )}
    </div>
  );
}

function SummaryPanel() {
  return (
    <section className="min-w-0 bg-white">
      <header className="relative h-[211px]">
        <svg viewBox="0 0 672 50" preserveAspectRatio="none" className="absolute bottom-0 left-0 h-[50px] w-full" aria-hidden="true">
          <path d="M0 0H598L669 49H0z" fill="#eee" />
          <path d="M0 7H439L447 13H0z" fill="#bdbdbd" />
          <path d="M71 18H601L610 25H71z" fill="#6e706e" />
        </svg>
        <div className="relative flex gap-3 pl-[59px] pt-[51px]">
          <HikerIcon />
          <div>
            <p className="text-[29px] font-bold leading-6 text-[#70778a]">Hiking</p>
            <h1 className="mt-4 text-[57px] font-medium leading-[72px] text-black">등산</h1>
          </div>
        </div>
      </header>
      <dl>
        <InfoRow icon={<CalendarIcon />} label="날짜" metrics={[{ value: '2020-06-26' }]} valueClass="text-[50px] leading-[51px] font-bold" padding="pt-[22px] pb-[18px]" />
        <InfoRow icon={<PinIcon />} label="위치" metrics={[{ value: '서울특별시 은평구' }]} valueClass="text-[48px] leading-[51px] font-medium" padding="pt-[22px] pb-[18px]" />
        <InfoRow icon={<CalorieIcon />} label={<>소모열<br />량</>} metrics={[{ value: '864.6', unit: 'kcal' }]} padding="pt-[19px] pb-[15px]" />
        <InfoRow
          icon={<RouteIcon />}
          label={<>거리정<br />보</>}
          metrics={[{ name: '전체거리', value: '7.9', unit: 'km' }, { name: '운동거리', value: '7.9', unit: 'km' }]}
          padding="pt-[10px] pb-[6px]"
        />
        <InfoRow
          icon={<TimeIcon />}
          label={<>시간정<br />보</>}
          metrics={[{ name: '전체시간', value: '06:29:38' }, { name: '운동시간', value: '05:16:20' }, { name: '휴식시간', value: '01:13:18' }]}
          padding="pt-[10px] pb-[6px]"
        />
        <InfoRow
          icon={<SpeedIcon />}
          label={<>속도정<br />보</>}
          metrics={[{ name: '최고', value: '4.1', unit: 'km/h' }, { name: '평균', value: '1.4', unit: 'km/h' }]}
          valueClass="text-[53px] leading-[71px] font-bold"
          padding="pt-[14px] pb-[10px]"
          more
        />
        <InfoRow
          icon={<SlopeIcon />}
          label={<>고도정<br />보</>}
          metrics={[{ name: '최고', value: '574', unit: 'm' }, { name: '최저', value: '100', unit: 'm' }]}
          valueClass="text-[53px] leading-[71px] font-bold"
          padding="pt-[14px] pb-[10px]"
          more
        />
      </dl>
      <button type="button" className="flex w-full items-center border-b-2 border-[#e2e2e2] py-4 pl-[33px] pr-[25px] text-left">
        <span className="h-11 w-11 shrink-0"><TimeIcon /></span>
        <span className="ml-[34px] flex-1 whitespace-nowrap text-[43px] font-medium leading-[51px] text-[#70778a]"><b>LAPS</b> 구간속도 및 시간</span>
        <ChevronRight />
      </button>
    </section>
  );
}

const OptionButton = () => (
  <button type="button" className="h-[52px] w-[58px] shrink-0 rounded-[18px] border-2 border-[#8a8a8a] bg-white text-[23px] leading-none text-[#8a8a8a]">
    옵션
  </button>
);

const round = 'absolute flex items-center justify-center rounded-full';

function MapPanel() {
  return (
    <section className="flex min-w-0 flex-col bg-[#f0f0f0]">
      <header className="flex h-[81px] items-center border-b-[5px] border-[#bcbcbc] bg-white pl-[15px] pr-[21px]">
        <button type="button" aria-label="뒤로"><BackArrow /></button>
        <h2 className="ml-[18px] flex-1 text-[31px] text-black">비봉-향로봉</h2>
        <OptionButton />
      </header>
      <div className="relative overflow-hidden">
        <TrailMap />
        <button type="button" aria-label="확대" className={`${round} right-[30px] top-[18px] h-[86px] w-[86px] bg-white`}>
          <svg viewBox="0 0 30 30" className="h-[30px] w-[30px]" stroke="#7d7d7d" strokeWidth="4"><path d="M0 15H30M15 0V30" /></svg>
        </button>
        <button type="button" aria-label="축소" className={`${round} right-[30px] top-[115px] h-[86px] w-[86px] bg-white`}>
          <svg viewBox="0 0 30 30" className="h-[30px] w-[30px]" stroke="#7d7d7d" strokeWidth="4"><path d="M0 15H30" /></svg>
        </button>
        <button type="button" aria-label="정보 열기" className="absolute bottom-[223px] left-0 flex h-[126px] w-[69px] items-center rounded-r-[34px] bg-white pl-[13px] shadow-md">
          <svg viewBox="0 0 38 46" className="h-[46px] w-[38px]" fill="none" stroke="#d43500" strokeWidth="10" strokeLinecap="round"><path d="M32 5L8 23L32 41" /></svg>
        </button>
        <button type="button" aria-label="현재 위치" className={`${round} bottom-[109px] right-[18px] h-[84px] w-[84px] bg-white`}>
          <svg viewBox="0 0 28 38" className="h-[38px] w-7" aria-hidden="true">
            <circle cx="14" cy="14" r="11" fill="none" stroke="#858585" strokeWidth="5" />
            <path d="M10 25h8l-4 12z" fill="#858585" />
          </svg>
        </button>
        <button type="button" aria-label="지도 종류" className={`${round} bottom-4 right-[18px] h-[84px] w-[84px] bg-white`}>
          <svg viewBox="0 0 60 52" className="h-[52px] w-[60px]" aria-hidden="true">
            <path d="M0 35L8 31L30 43L52 31L60 35L30 51zM0 26L8 22L30 34L52 22L60 26L30 42z" fill="#858585" stroke="#fff" strokeWidth="1" />
            <path d="M30 0L60 17L30 34L0 17z" fill="#858585" stroke="#fff" strokeWidth="1" />
          </svg>
        </button>
        <button type="button" aria-label="속도" className={`${round} bottom-2 left-[278px] h-[84px] w-[84px] border border-[#d5d5d5] bg-[#eeecee]`}>
          <svg viewBox="0 0 64 64" className="h-16 w-16" fill="none" stroke="#1f4269" aria-hidden="true">
            <path d="M31 4A28 28 0 1 0 54 50" strokeWidth="6" />
            <path d="M57 46A28 28 0 0 0 34 4" strokeWidth="6" strokeDasharray="17 2 12 2 8 2 6 2 8 2" />
            <path d="M10 37H54A22 20 0 0 1 10 37z" fill="#1f4269" stroke="none" />
            <path d="M32 16v-5M23 18l-3-4M41 18l3-4M17 24l-4-3M47 24l4-3M15 33h-5M49 33h5" strokeWidth="3" />
            <circle cx="32" cy="42" r="5" fill="#1f4269" stroke="#eee" strokeWidth="2" />
            <path d="M30 40L32 28L34 40z" fill="#1f4269" stroke="#1f4269" />
            <circle cx="32" cy="42" r="2" fill="#eee" stroke="none" />
            <circle cx="20" cy="42" r="1" fill="#eee" stroke="#eee" />
            <circle cx="44" cy="42" r="1" fill="#eee" stroke="#eee" />
          </svg>
        </button>
        <button type="button" aria-label="고도" className={`${round} bottom-2 left-[372px] h-[84px] w-[84px] border border-[#d5d5d5] bg-[#eeecee]`}>
          <svg viewBox="0 0 56 52" className="h-[52px] w-14" fill="#62493e" aria-hidden="true">
            <path d="M0 50V43L44 12H55L36 25V44H51V50zM13 44H31V29z" fillRule="evenodd" />
            <path d="M21 19L33 8L30 4L41 1L42 13L38 11L26 26zM14 23l4-3l5 8l-4 3zM8 26l3-2l5 8l-3 2zM3 28l2-1l4 7l-2 1z" />
          </svg>
        </button>
        <a href="#naver" className="absolute bottom-[29px] left-[22px] rounded-full bg-white px-3 text-[19px] font-black leading-7 text-[#12b83c] shadow">NAVER</a>
      </div>
      <div className="bg-[#eee] px-5 text-[46px] leading-[70px] text-[#767f8a]">
        <p className="flex items-center whitespace-nowrap">
          <span className="h-8 w-8 shrink-0"><RouteIcon /></span>
          <span className="ml-3">전체거리</span>
          <span className="ml-3 text-[48px] text-[#c43400]">7.90km</span>
        </p>
        <p className="mt-[2px] flex h-[54px] items-start overflow-hidden whitespace-nowrap">
          <span className="mt-3 h-8 w-8 shrink-0"><TimeIcon /></span>
          <span className="ml-3">예상시간</span>
          <span className="ml-3 text-[47px] text-[#c43400]">6시간 29분</span>
        </p>
      </div>
    </section>
  );
}

const ALTITUDE: Pt[] = [
  [54, 463], [166, 463], [179, 462], [203, 459], [224, 451], [249, 443], [278, 437], [314, 434], [343, 431], [359, 428], [369, 424], [383, 413], [394, 408], [406, 405], [422, 397], [448, 389], [471, 375], [489, 367], [511, 364], [522, 361], [540, 351], [556, 345], [574, 333], [590, 328], [603, 326], [628, 317], [646, 310], [650, 309], [703, 309],
  [793, 309], [838, 309], [887, 312], [963, 315], [994, 317], [1026, 324], [1048, 328], [1067, 329], [1077, 334], [1102, 352], [1142, 372], [1160, 383], [1181, 392], [1194, 400], [1216, 412], [1230, 425], [1246, 437], [1286, 446], [1313, 450], [1331, 454], [1349, 455],
];

const SPEED: Pt[] = [
  [56, 495], [59, 461], [65, 427], [67, 433], [70, 427], [73, 415], [77, 408], [84, 394], [90, 389], [96, 378], [100, 380], [107, 372], [110, 372], [114, 366], [122, 362], [126, 362], [133, 360], [137, 367], [144, 368], [147, 374], [158, 371], [162, 372], [167, 378], [170, 378], [171, 389], [175, 395], [185, 397], [188, 392], [193, 399], [204, 405], [213, 405], [224, 409], [229, 414], [238, 415], [251, 421], [265, 426], [280, 425], [300, 427], [306, 421], [321, 420], [330, 415], [345, 416], [357, 417], [372, 416], [379, 423], [390, 425], [406, 430], [419, 431], [426, 436], [432, 434], [437, 440], [454, 443], [464, 454], [480, 456], [507, 455], [516, 452], [538, 449], [561, 446], [572, 439], [585, 436], [591, 423], [594, 416], [598, 424], [610, 425], [617, 431], [623, 441], [630, 450], [637, 452], [643, 465], [680, 464], [703, 463],
  [721, 467], [748, 465], [768, 455], [771, 443], [775, 429], [788, 425], [815, 424], [829, 426], [836, 430], [844, 427], [849, 413], [856, 414], [860, 402], [871, 404], [876, 397], [881, 410], [896, 412], [908, 415], [920, 429], [923, 445], [930, 456], [990, 460], [1019, 463], [1028, 467], [1048, 466], [1060, 454], [1068, 457], [1093, 459], [1116, 456], [1133, 450], [1149, 451], [1158, 441], [1190, 438], [1199, 429], [1208, 421], [1214, 421], [1219, 413], [1227, 425], [1263, 426], [1268, 422], [1286, 415], [1317, 409], [1331, 402], [1349, 401],
];

const BASE = 496;
const STEPS = Array.from({ length: 14 }, (_, i) => i + 1);
const KM = [1, 2, 3, 4, 5, 6, 7];

function ElevationChart() {
  const line = toPoints(ALTITUDE);
  return (
    <svg viewBox="0 0 1403 537" className="block h-auto w-full" role="img" aria-label="속도/고도 그래프">
      <defs>
        <linearGradient id="chartBg" x1="0" y1="0" x2="0" y2="1">
          <stop offset="0" stopColor="#bdbdbd" />
          <stop offset="0.02" stopColor="#dadada" />
          <stop offset="0.06" stopColor="#e8e8e8" />
          <stop offset="0.4" stopColor="#f0f0f0" />
          <stop offset="1" stopColor="#fff" />
        </linearGradient>
        <linearGradient id="altitudeFill" gradientUnits="userSpaceOnUse" x1="0" y1="309" x2="0" y2={BASE}>
          <stop offset="0" stopColor="#fff31f" />
          <stop offset="0.35" stopColor="#fccb36" />
          <stop offset="0.75" stopColor="#ff9f50" />
          <stop offset="1" stopColor="#ff835e" />
        </linearGradient>
        <clipPath id="chartClip"><rect width="1377" height="537" /></clipPath>
      </defs>
      <rect width="1403" height="537" fill="url(#chartBg)" />
      <polygon points={`54,${BASE} ${line} 1349,${BASE}`} fill="url(#altitudeFill)" />
      <g stroke="#c8c8c8" strokeOpacity=".7" strokeWidth="1">
        {STEPS.map((s) => <path key={s} d={`M53 ${Math.round(BASE - s * 32.74)}H1349`} />)}
      </g>
      <path d={`M53 ${BASE}H1349V19`} fill="none" stroke="#c6c6c6" strokeWidth="2" />
      <polyline points={`54,${BASE} ${line}`} fill="none" stroke="#111" strokeWidth="1.500" />
      <polyline points={toPoints(SPEED)} fill="none" stroke="#4f78ba" strokeWidth="1.200" />
      {KM.map((k) => (
        <path key={k} d={`M${Math.round(53 + k * 164.2)} 489v8`} stroke={k === 1 ? '#d0d0d0' : '#111'} strokeWidth="2" />
      ))}
      <g fontFamily="Roboto, 'Noto Sans CJK KR', sans-serif" fontSize="21" fill="#000" clipPath="url(#chartClip)">
        {STEPS.filter((s) => s % 2 === 0).map((s) => (
          <text key={s} x="51" y={Math.round(BASE - s * 32.74) - 1} textAnchor="end">{s * 100}</text>
        ))}
        <text x="51" y={BASE - 1} textAnchor="end">0</text>
        {KM.map((k) => (
          <text key={k} x={Math.round(53 + k * 164.2)} y="517" textAnchor="end">{`${k}.0km`}</text>
        ))}
        <text x="1314" y="517">7.91km</text>
        <text x="1353" y="29">10</text>
        <text x="1365" y={BASE - 1}>0</text>
        <text x="67" y="32" fill="#b80000">고도(m)</text>
        <text x="1335" y="32" fill="#0000a0" textAnchor="end">속도(km/h)</text>
      </g>
    </svg>
  );
}

export default function App() {
  return (
    <main className="bg-[#f2f2f2] font-['Roboto','Noto_Sans_CJK_KR',sans-serif]">
      <div className="grid grid-cols-[672fr_734fr]">
        <SummaryPanel />
        <MapPanel />
      </div>
      <section className="mr-[3px]">
        <header className="flex h-[58px] items-start justify-between bg-white pl-[15px] pr-[21px]">
          <div className="flex items-center gap-[17px] pt-1">
            <button type="button" aria-label="뒤로"><BackArrow /></button>
            <h2 className="text-[27px] leading-[46px] text-black">속도/고도 상세정보</h2>
          </div>
          <OptionButton />
        </header>
        <div className="relative">
          <ElevationChart />
          <p className="absolute bottom-0 right-[60px] flex gap-8 whitespace-nowrap text-[50px] font-medium leading-[72px] text-white [text-shadow:2px_2px_2px_#333]">
            <span>어리버리</span>
            <span>산행~</span>
          </p>
        </div>
      </section>
    </main>
  );
}
